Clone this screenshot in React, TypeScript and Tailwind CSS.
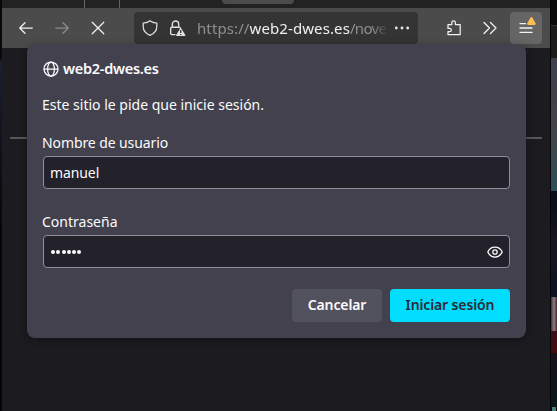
import type { ReactNode } from "react";

function Icon({ size = 16, className = "", children }: { size?: number; className?: string; children: ReactNode }) {
  return (
    <svg width={size} height={size} viewBox="0 0 16 16" fill="none" stroke="currentColor" strokeWidth="1.25" strokeLinecap="round" strokeLinejoin="round" className={"shrink-0 " + className}>
      {children}
    </svg>
  );
}

function Tabs() {
  return (
    <div className="flex h-2 bg-[#222222]">
      <div className="w-[83px] border-r border-[#6a6a6a]" />
      <div className="w-[35px] border-r border-[#626262]" />
      <div className="ml-[102px] h-1 w-[72px] rounded-b bg-[#4b4b4b]" />
    </div>
  );
}

function Toolbar() {
  return (
    <div className="flex h-10 items-center bg-[#4b4b4b] pr-2 text-[#f2f2f2]">
      <Icon className="ml-4"><path d="M14.3 8H1.7M7 2.7 1.7 8 7 13.3" /></Icon>
      <Icon className="ml-5 text-[#8c8c8c]"><path d="M1.7 8h12.6M9 2.7 14.3 8 9 13.3" /></Icon>
      <Icon className="ml-5"><path d="m2.2 2.2 11.6 11.6M13.8 2.2 2.2 13.8" /></Icon>
      <div className="ml-7 flex h-8 w-[284px] items-center rounded bg-[#343434] pl-2">
        <Icon className="text-[#dedede]"><path d="M8 .8C6.2 2.4 3.7 3 1.2 3.2v3.3c0 4 2.6 7.1 6.8 8.8 4.2-1.7 6.8-4.8 6.8-8.8V3.2C12.3 3 9.8 2.4 8 .8Z" /></Icon>
        <svg width="17" height="17" viewBox="0 0 17 17" className="ml-[11px] shrink-0" fill="none">
          <path d="M6.5 14.6H3a1.3 1.3 0 0 1-1.3-1.3V8.5A1.3 1.3 0 0 1 3 7.2h7a1.3 1.3 0 0 1 1.3 1M3.3 7V4.2a3.2 3.2 0 0 1 6.4 0V7" stroke="#dedede" strokeWidth="1.4" />
          <path d="M11.7 7.5 7.2 15q-.4 1 .6 1h7.9q1 0 .6-1Z" fill="#e2e2e2" />
          <path d="M11.7 10v3M11.7 14v1" stroke="#343434" strokeWidth="1.3" />
        </svg>
        <div className="-mt-px ml-[11px] w-[192px] whitespace-nowrap text-[15px] leading-5 tracking-[0.1px] text-[#8f8f8f] [mask-image:linear-gradient(to_right,black_91%,transparent)]">
          https://<span className="text-[#f0f0f0]">web2-dwes.es</span><span className="tracking-[-0.65px]">/nove</span>
        </div>
        <svg width="16" height="16" viewBox="0 0 16 16" className="ml-[5px] shrink-0" fill="#e8e8e8">
          <circle cx="2.3" cy="8" r="1.4" /><circle cx="8" cy="8" r="1.4" /><circle cx="13.7" cy="8" r="1.4" />
        </svg>
      </div>
      <Icon className="ml-7"><path d="M2 4.6h3.8V2.7a1.8 1.8 0 0 1 3.6 0v1.9h4.8v10H2v-3h1.7a1.6 1.6 0 0 0 0-3.2H2Z" /></Icon>
      <Icon className="ml-5"><path d="m2 2.5 5.5 5.5L2 13.5M8.5 2.5 14 8l-5.5 5.5" /></Icon>
      <div className="ml-auto flex size-8 items-center justify-center rounded bg-[#656565]">
        <svg width="18" height="20" viewBox="0 0 18 20" fill="none" className="overflow-visible">
          <path d="M3 5.6h5.5M3 10h12M3 14.4h12" stroke="#f2f2f2" strokeWidth="1.3" strokeLinecap="round" />
          <path d="M13.5-.4q.9-1.2 1.8 0l3.2 5.7q.5 1.7-.8 1.7h-6.6q-1.300 0-.8-1.700Z" fill="#ffbd4f" />
        </svg>
      </div>
    </div>
  );
}

function Globe() {
  return (
    <Icon className="text-[#fbfbfe]">
      <circle cx="8" cy="8" r="7" />
      <ellipse cx="8" cy="8" rx="3.4" ry="7" />
      <path d="M1.2 8h13.6" />
    </Icon>
  );
}

function LoginDialog() {
  return (
    <div role="dialog" className="absolute left-[27px] top-11 flex h-[294px] w-[499px] flex-col rounded-lg bg-[#42414d] px-4 pt-4 text-[#fbfbfe] shadow-[0_2px_8px_rgba(0,0,0,0.35)]">
      <div className="flex h-[18px] items-center gap-1">
        <Globe />
        <span className="-mt-0.5 text-[14.5px] font-semibold leading-[18px] tracking-[-0.28px]">web2-dwes.es</span>
      </div>
      <p className="-ml-px mt-[17px] h-5 text-[14px] leading-5">Este sitio le pide que inicie sesión.</p>
      <label className="-ml-px mt-[18px] h-5 text-[14px] leading-5 tracking-[-0.1px]">Nombre de usuario</label>
      <div className="mt-[3px] flex h-[33px] w-[467px] items-center rounded border border-[#8f8f9d] bg-[#23222b] px-[6px] text-[14px] tracking-[-0.1px]">manuel</div>
      <label className="-ml-px mt-[23px] h-5 text-[14px] leading-5">Contraseña</label>
      <div className="mt-[3px] flex h-[33px] w-[467px] shrink-0 items-center justify-between rounded border border-[#8f8f9d] bg-[#23222b] pl-[7px] pr-[6px]">
        <span className="flex gap-[1.3px]">
          {[0, 1, 2, 3, 4, 5].map((n) => <i key={n} className="size-1 rounded-full bg-[#fbfbfe]" />)}
        </span>
        <Icon><path d="M.8 8C2.2 4.7 4.8 3 8 3s5.8 1.7 7.2 5C13.8 11.3 11.2 13 8 13S2.2 11.3.8 8Z" /><circle cx="8" cy="8" r="2.2" /></Icon>
      </div>
      <div className="mt-[21px] flex justify-end gap-2 text-[14px] font-semibold tracking-[-0.12px]">
        <button className="h-[33px] w-[90px] rounded bg-[#52515e] pb-0.5">Cancelar</button>
        <button className="h-[33px] w-[120px] rounded bg-[#00ddff] pb-0.5 text-[#2b2a33]">Iniciar sesión</button>
      </div>
    </div>
  );
}

export default function App() {
  return (
    <div className="relative flex h-[411px] w-[557px] overflow-hidden bg-[#050505] font-['Noto_Sans',sans-serif]">
      <div className="w-[2px] bg-gradient-to-b from-[#080808] from-14% via-[#172033] via-15% to-[#050505] to-60%" />
      <div className="w-[548px] bg-[#1c1b1f]">
        <Tabs />
        <Toolbar />
        <div className="mx-2 mt-[89px] h-[2px] bg-[#565656]" />
      </div>
      <div className="ml-px flex w-[6px] flex-col">
        <div className="h-[25px] bg-[#090909]" />
        <div className="h-[33px] border-t border-[#333333] bg-[#1b1b19]" />
        <div className="h-[133px] bg-gradient-to-b from-[#3e4050] via-[#44434a] via-50% to-[#2b5059]" />
        <div className="h-[106px] bg-gradient-to-b from-[#080d19] via-[#171522] to-[#0c1023]" />
        <div className="h-[34px] bg-gradient-to-r from-[#40303a] via-[#8d8085] to-[#46242f]" />
        <div className="h-[22px] bg-gradient-to-b from-[#371018] to-[#48080c]" />
        <div className="h-[54px] bg-gradient-to-b from-[#17101b] to-[#071719]" />
        <div className="ml-px size-1 bg-[#49827c]" />
      </div>
      <LoginDialog />
    </div>
  );
}
